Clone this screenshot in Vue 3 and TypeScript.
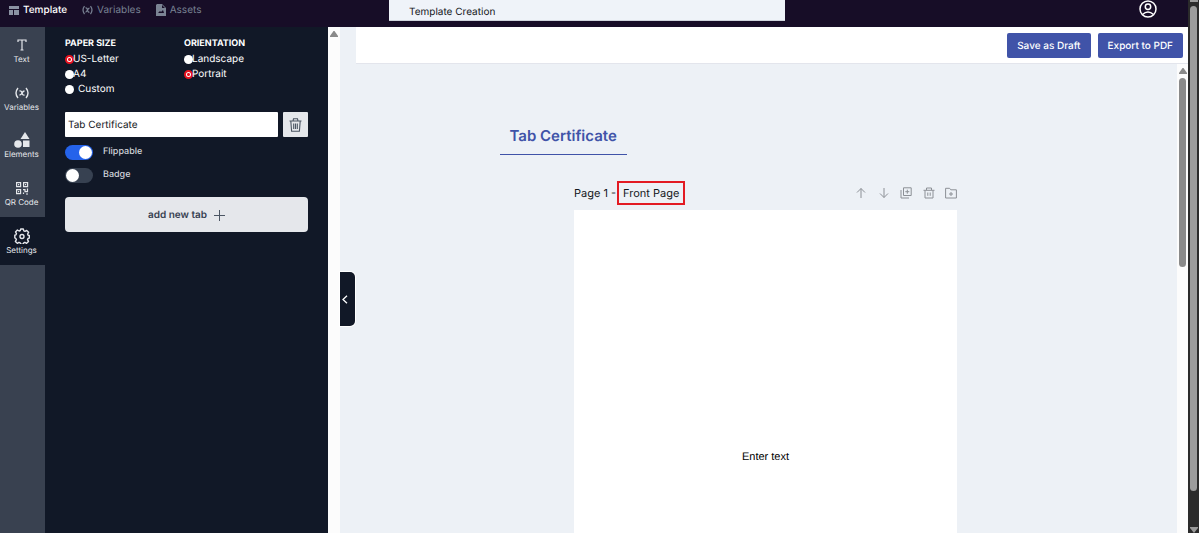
<script setup lang="ts">
import { ref } from 'vue'

const railItems = ['Text', 'Variables', 'Elements', 'QR Code', 'Settings']
const activeRail = ref('Settings')
const paper = ref('US-Letter')
const orientation = ref('Portrait')
const title = ref('Template Creation')
const tabName = ref('Tab Certificate')
const flippable = ref(true)
const badge = ref(false)
</script>

<template>
  <div class="app">
    <div class="shell">
      <header class="header">
        <nav class="menu">
          <a href="#" class="menu-link current">
            <svg width="10" height="10" viewBox="0 0 10 10" fill="#8b93a3"><path d="M0 1h10v3H0zM0 5h4v5H0zM5 5h5v5H5z" /></svg>
            Template
          </a>
          <a href="#" class="menu-link">
            <svg width="11" height="10" viewBox="0 0 22 20" fill="none" stroke="currentColor" stroke-width="2.500"><path d="M5 2Q-1 10 5 18M17 2Q23 10 17 18M7 6q3-1 4 4t4 4M15 6q-2 0-4 4t-4 4" /></svg>
            Variables
          </a>
          <a href="#" class="menu-link">
            <svg width="10" height="12" viewBox="0 0 10 12"><path d="M1 0h5l4 4v8H0V1z" fill="#7b8494" /><path d="M6 1v3h3M2 9l2-2 1 1 2-2 1 3z" fill="#170d27" /></svg>
            Assets
          </a>
        </nav>
        <input v-model="title" class="title" aria-label="Template title" />
        <div class="account">
          <button class="plain" aria-label="Account">
            <svg width="18" height="18" viewBox="0 0 18 18" fill="none" stroke="#fff" stroke-width="1.5"><circle cx="9" cy="9" r="8" /><circle cx="9" cy="6.8" r="2.7" /><path d="M3.5 14.5q5.500-5 11 0" /></svg>
          </button>
        </div>
      </header>

      <div class="body">
        <nav class="rail">
          <div class="rail-list">
            <button v-for="item in railItems" :key="item" class="rail-item" :class="{ active: activeRail === item }" @click="activeRail = item">
              <svg width="16" height="16" viewBox="0 0 16 16" fill="none" stroke="currentColor" stroke-width="1.2">
                <path v-if="item === 'Text'" d="M4 5V3h8v2M8 3v10M6.500 13h3" />
                <path v-else-if="item === 'Variables'" stroke-width="1.4" d="M4 3Q0 8 4 13M12 3q4 5 0 10M5.500 6q2-.5 2.500 2t2.500 2M10.500 6Q9 6 8 8t-2.500 2" />
                <g v-else-if="item === 'Elements'" fill="currentColor" stroke="none"><path d="M11 0l4.500 7h-9z" /><circle cx="4" cy="12" r="3.800" /><path d="M9 8.500h6.500V15H9z" /></g>
                <g v-else-if="item === 'QR Code'">
                  <path d="M2.600 2.600h4v4h-4zM9.600 2.600h4v4h-4zM2.600 9.600h4v4h-4z" />
                  <path d="M4 4.600h1.200M11 4.600h1.200M4 11.600h1.200M9 9.600h2v2h2.500v-3M9.500 14v-1.500M12 14h2" />
                </g>
                <g v-else stroke-width="1.4">
                  <path d="M6.700 1h2.600l.5 1.900 1.200.5 1.700-1 1.900 1.900-1 1.700.5 1.200 1.200.3v2.600l-1.300.4-.5 1.200 1 1.700-1.900 1.900-1.700-1-1.200.5-.4 1.400H6.700l-.5-1.400-1.200-.5-1.700 1-1.900-1.900 1-1.700-.5-1.200L.8 9.800V7.200L2 6.800l.5-1.200-1-1.700L3.400 2l1.700 1 1.200-.5z" stroke-linejoin="round" />
                  <circle cx="8" cy="8.500" r="2" />
                </g>
              </svg>
              <span>{{ item }}</span>
            </button>
          </div>
        </nav>

        <aside class="panel">
          <div class="choices">
            <fieldset>
              <legend>PAPER SIZE</legend>
              <label><input v-model="paper" type="radio" name="paper" value="US-Letter" />US-Letter</label>
              <label><input v-model="paper" type="radio" name="paper" value="A4" />A4</label>
              <label class="spaced"><input v-model="paper" type="radio" name="paper" value="Custom" />Custom</label>
            </fieldset>
            <fieldset>
              <legend>ORIENTATION</legend>
              <label><input v-model="orientation" type="radio" name="orientation" value="Landscape" />Landscape</label>
              <label><input v-model="orientation" type="radio" name="orientation" value="Portrait" />Portrait</label>
            </fieldset>
          </div>
          <div class="tab-row">
            <input v-model="tabName" class="tab-name" aria-label="Tab name" />
            <button class="delete" aria-label="Delete tab">
              <svg width="13" height="14" viewBox="0 0 13 14" fill="none" stroke="#4b5563" stroke-width="1.100"><path d="M.5 3h12M4 3l.5-2.200h4L9 3M1.800 3l.8 10.300h7.800L11.200 3M4.700 5.500v5.500M6.500 5.500v5.500M8.300 5.500v5.500" /></svg>
            </button>
          </div>
          <label class="switch"><input v-model="flippable" type="checkbox" />Flippable</label>
          <label class="switch"><input v-model="badge" type="checkbox" />Badge</label>
          <button class="add">
            add new tab
            <svg width="11" height="11" viewBox="0 0 11 11" stroke="#4b5563"><path d="M5.500 0v11M0 5.500h11" /></svg>
          </button>
        </aside>

        <div class="track">
          <svg width="8" height="6" viewBox="0 0 8 6" fill="#8a8a8a"><path d="M3.500 0h1L8 5v1H0V5z" /></svg>
        </div>

        <main class="workspace">
          <button class="handle" aria-label="Collapse panel">
            <svg width="6" height="9" viewBox="0 0 6 9" fill="none" stroke="#fff" stroke-width="1.300"><path d="M5 .7L1 4.500l4 3.800" /></svg>
          </button>
          <div class="toolbar">
            <button class="primary">Save as Draft</button>
            <button class="primary">Export to PDF</button>
          </div>
          <div class="viewport">
            <div class="canvas">
              <div class="tabs"><button class="tab">Tab Certificate</button></div>
              <section class="sheet">
                <div class="sheet-head">
                  <span class="sheet-title">Page 1 -</span>
                  <span class="marked">Front Page</span>
                  <div class="tools">
                    <button class="plain" aria-label="Move up"><svg width="12" height="12" viewBox="0 0 12 12"><path d="M6 11V1.500M2 5.500l4-4 4 4" /></svg></button>
                    <button class="plain" aria-label="Move down"><svg width="12" height="12" viewBox="0 0 12 12"><path d="M6 1v9.500M2 6.500l4 4 4-4" /></svg></button>
                    <button class="plain" aria-label="Duplicate page"><svg width="12" height="12" viewBox="0 0 12 12"><path d="M3.500.8h7.700v7.700H3.500zM1 3v8h8M7.300 2.700v4M5.300 4.700h4" /></svg></button>
                    <button class="plain" aria-label="Delete page"><svg width="12" height="12" viewBox="0 0 12 12"><path d="M.5 3.300h11M3.500 3V1h5v2M2 3.500V11h8V3.500M4.800 5.500v3.300M7.200 5.500v3.300" /></svg></button>
                    <button class="plain" aria-label="Add page"><svg width="12" height="12" viewBox="0 0 12 12"><path d="M.6 1.300h4l1.200 1.500h5.600v8.200H.6zM6 5v4M4 7h4" /></svg></button>
                  </div>
                </div>
                <div class="paper"><p>Enter text</p></div>
              </section>
            </div>
            <div class="track inner">
              <svg width="8" height="6" viewBox="0 0 8 6" fill="#8a8a8a"><path d="M3.500 0h1L8 5v1H0V5z" /></svg>
              <div class="thumb"></div>
            </div>
          </div>
        </main>
      </div>
    </div>

    <div class="page-track">
      <svg width="8" height="3" viewBox="0 0 8 3" fill="#9a9a9a"><path d="M0 0h8v2H0z" /></svg>
      <div class="page-thumb"></div>
      <svg width="8" height="6" viewBox="0 0 8 6" fill="#9a9a9a"><path d="M0 0h8v1L4 6 0 1z" /></svg>
    </div>
  </div>
</template>

<style>
body { margin: 0; }
</style>

<style scoped>
* { box-sizing: border-box; }
.app { display: flex; height: 100vh; overflow: hidden; font: 10px/16px Inter, "Liberation Sans", sans-serif; text-rendering: geometricPrecision; color: #15181c; }
button, input { font: inherit; color: inherit; text-rendering: inherit; border: 0; margin: 0; padding: 0; }
button { cursor: pointer; }
svg { display: block; flex: none; }
.plain { background: none; }
.shell { flex: 1; min-width: 0; display: flex; flex-direction: column; }
.header { flex: none; height: 27px; background: #170d27; display: grid; grid-template-columns: 1fr 396px 1fr; align-items: start; }
.menu { display: flex; gap: 15px; padding: 2px 0 0 9px; }
.menu-link { display: flex; align-items: center; gap: 4px; color: #788192; text-decoration: none; }
.menu-link.current { color: #fff; font-weight: 500; }
.title { height: 21px; min-width: 0; margin-left: -7px; margin-right: 7px; padding: 4px 20px 0; background: #eff3f9; border-bottom: 1px solid #cfd4dc; border-radius: 0; }
.account { display: flex; justify-content: flex-end; padding-right: 31px; }
.body { flex: 1; min-height: 0; display: flex; }
.rail { width: 45px; background: #394150; flex: none; }
.rail-list { display: grid; grid-template-rows: repeat(5, 1fr); height: 238px; }
.rail-item { background: none; color: #e5e7eb; display: flex; flex-direction: column; align-items: center; justify-content: center; gap: 1px; padding-right: 2px; font-size: 8px; line-height: 10px; }
.rail-item.active { background: #111827; }
.panel { flex: none; width: 283px; background: #111827; padding: 9px 20px; color: #fff; }
.choices { display: grid; grid-template-columns: 119px 1fr; }
fieldset { border: 0; margin: 0; padding: 0; min-width: 0; }
legend { padding: 0; font-size: 9px; font-weight: 700; line-height: 16px; }
fieldset label { display: flex; align-items: center; height: 15px; line-height: 17px; }
fieldset label.spaced { gap: 5px; }
input[type="radio"] { appearance: none; flex: none; width: 9px; height: 9px; margin-right: -1px; border-radius: 50%; background: #fff; }
input[type="radio"]:checked { border: 2px solid #e8121f; background: radial-gradient(circle, #e8121f 1px, #fff 2px); }
.tab-row { display: flex; gap: 5px; margin: 15px 0 7px; }
.tab-name { flex: 1; min-width: 0; height: 25px; background: #fff; color: #15181c; padding: 1px 3px 0; border-radius: 1px; }
.delete { width: 25px; height: 25px; display: grid; place-items: center; background: #e5e7eb; border-radius: 1px; }
.switch { display: flex; align-items: center; gap: 10px; height: 16px; margin-bottom: 7px; color: #d1d5db; font-size: 9px; font-weight: 500; }
.switch input { appearance: none; width: 28px; height: 15px; padding: 1px; border-radius: 8px; background: #374151; display: flex; }
.switch input::before { content: ""; width: 13px; height: 13px; border-radius: 50%; background: #fff; }
.switch input:checked { background: #2563eb; justify-content: flex-end; }
.add { width: 100%; height: 35px; margin-top: 14px; padding-top: 1px; display: flex; align-items: center; justify-content: center; gap: 7px; background: #e5e7eb; color: #374151; border-radius: 4px; font-weight: 600; }
.track { flex: none; width: 12px; background: #fcfcfc; display: flex; flex-direction: column; align-items: center; padding-top: 4px; }
.workspace { flex: 1; min-width: 0; position: relative; display: flex; flex-direction: column; background: #edf1f6; padding-left: 16px; }
.handle { position: absolute; left: 0; top: 245px; width: 15px; height: 54px; display: flex; align-items: center; padding-left: 2px; background: #111827; border-radius: 0 5px 5px 0; box-shadow: 0 0 0 1px #fff; }
.toolbar { flex: none; height: 37px; background: #fff; border-bottom: 1px solid #e3e5ec; display: flex; align-items: center; justify-content: flex-end; gap: 7px; padding-right: 5px; }
.primary { height: 25px; padding: 1px 10px 0; background: #4053a8; color: #fff; border-radius: 2px; font-weight: 500; }
.viewport { flex: 1; min-height: 0; display: flex; }
.canvas { flex: 1; min-width: 0; overflow: hidden; display: flex; flex-direction: column; align-items: center; padding: 53px 2px 0 0; }
.tabs { width: 532px; max-width: 100%; flex: none; }
.tab { height: 38px; padding: 0 10px; background: none; color: #4053a8; border-bottom: 1px solid #4053a8; font-size: 15px; font-weight: 600; }
.sheet { width: 383px; max-width: 100%; flex: 1; display: flex; flex-direction: column; margin-top: 26px; }
.sheet-head { display: flex; align-items: center; height: 24px; font-size: 11px; flex: none; }
.sheet-title { padding-right: 1px; }
.marked { border: 2px solid #e31b23; height: 24px; line-height: 20px; padding: 0 4px; }
.tools { margin-left: auto; width: 102px; display: flex; justify-content: space-between; }
.tools svg { fill: none; stroke: #8c9096; stroke-width: 1; }
.paper { flex: 1; margin-top: 5px; background: #fff; text-align: center; padding-top: 239px; }
.paper p { margin: 0; font-family: "Liberation Sans", Arial, sans-serif; font-size: 11px; color: #000; }
.inner { width: 11px; }
.thumb { width: 7px; height: 189px; margin-top: 4px; border-radius: 4px; background: #8a8a8a; }
.page-track { flex: none; width: 12px; background: #2b2b2b; display: flex; flex-direction: column; align-items: center; border-right: 1px solid #fff; }
.page-thumb { width: 7px; flex: 1; margin: 3px 0 36px; background: #9c9c9c; border-radius: 4px; }
</style>
